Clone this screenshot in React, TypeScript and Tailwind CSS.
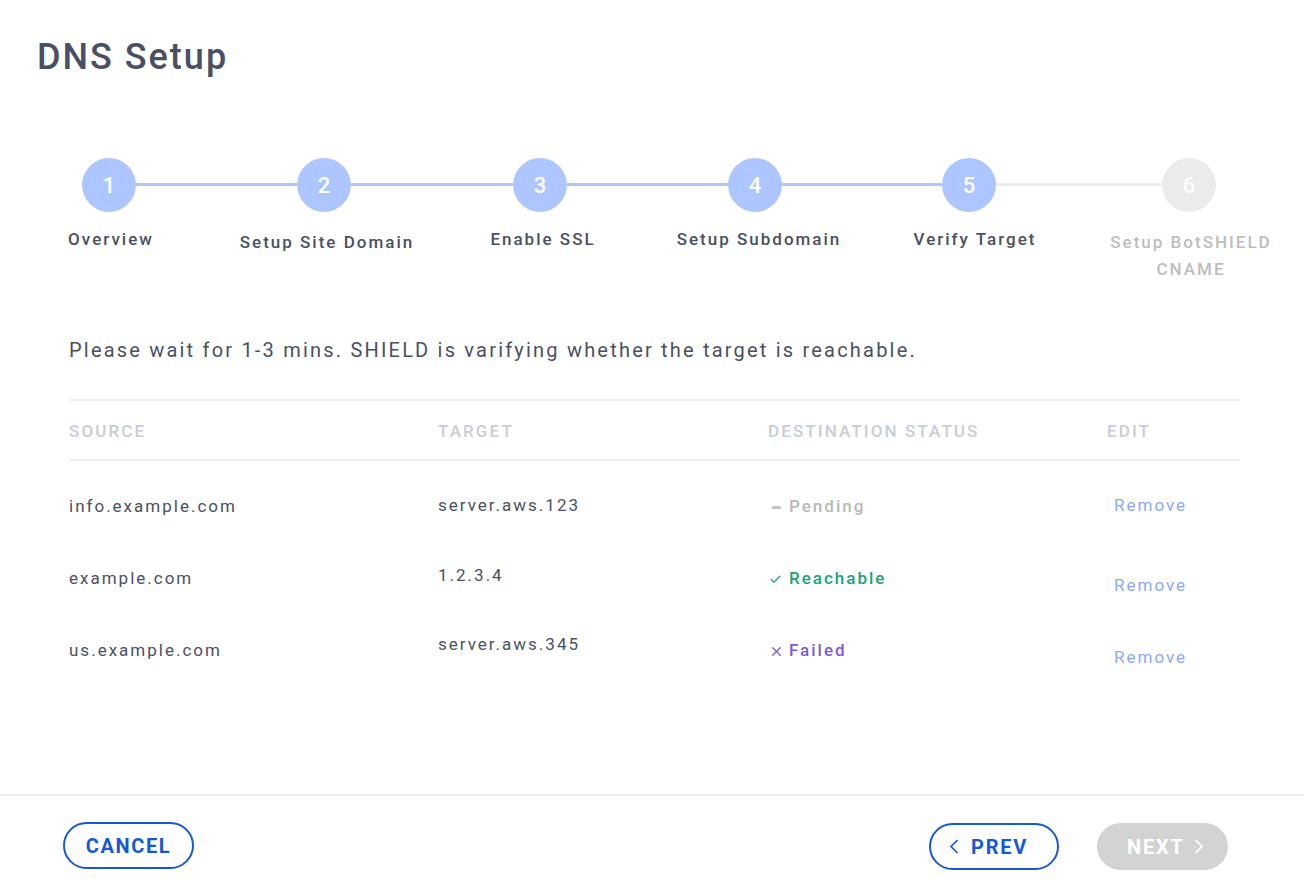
import { Check, X } from "lucide-react";

type Step = { n: number; label: string; done: boolean; nudge: string; shift?: boolean; wrap?: boolean };

const steps: Step[] = [
  { n: 1, label: "Overview", done: true, nudge: "ml-[4px]" },
  { n: 2, label: "Setup Site Domain", done: true, nudge: "ml-[6px]", shift: true },
  { n: 3, label: "Enable SSL", done: true, nudge: "ml-[6px]" },
  { n: 4, label: "Setup Subdomain", done: true, nudge: "ml-[8px]" },
  { n: 5, label: "Verify Target", done: true, nudge: "ml-[12px]" },
  { n: 6, label: "Setup BotSHIELD CNAME", done: false, nudge: "ml-[4px]", shift: true, wrap: true },
];

// gap widths between circles, left to right
const lineWidths = ["w-[161px]", "w-[162px]", "w-[161px]", "w-[160px]", "w-[166px]"];

type Row = {
  source: string;
  target: string;
  status: "pending" | "reachable" | "failed";
  targetClass: string;
  removeClass: string;
};

const rows: Row[] = [
  { source: "info.example.com", target: "server.aws.123", status: "pending", targetClass: "mb-[2px]", removeClass: "mb-[2px]" },
  { source: "example.com", target: "1.2.3.4", status: "reachable", targetClass: "mb-[6px]", removeClass: "mt-[14px]" },
  { source: "us.example.com", target: "server.aws.345", status: "failed", targetClass: "mb-[12px]", removeClass: "mt-[14px]" },
];

function Status({ status }: { status: Row["status"] }) {
  if (status === "pending") {
    return (
      <span className="flex items-center gap-[8px] font-medium text-[#b8b8b8]">
        <span className="ml-[4px] w-[9px] h-[3px] bg-[#c4c4c4] rounded-[1px]" />
        Pending
      </span>
    );
  }
  if (status === "reachable") {
    return (
      <span className="flex items-center gap-[7px] font-medium text-[#1ba47c]">
        <Check className="ml-[1px] w-[13px] h-[13px]" strokeWidth={2.2} />
        Reachable
      </span>
    );
  }
  return (
    <span className="flex items-center gap-[5px] font-medium text-[#7b5bd9]">
      <X className="ml-[1px] w-[15px] h-[15px]" strokeWidth={2.2} />
      Failed
    </span>
  );
}

function Chevron({ dir }: { dir: "left" | "right" }) {
  return (
    <svg width="10" height="15" viewBox="0 0 10 15" fill="none" stroke="currentColor" strokeWidth="1.7">
      {dir === "left" ? <path d="M8.5 1 L2 7.5 L8.5 14" /> : <path d="M1.5 1 L8 7.5 L1.5 14" />}
    </svg>
  );
}

export default function App() {
  return (
    <div
      className="w-[1304px] h-[894px] bg-white flex flex-col text-[#4a5064]"
      style={{ fontFamily: "Roboto, 'Open Sans', sans-serif" }}
    >
      {/* Title */}
      <h1 className="pl-[37px] pt-[35px] text-[36px] leading-[44px] font-medium tracking-[2px]">
        DNS Setup
      </h1>

      {/* Stepper */}
      <div className="flex items-start pl-[82px] mt-[79px] h-[178px]">
        {steps.map((s, i) => (
          <div key={s.n} className="flex items-start">
            <div className="flex flex-col items-center w-[54px]">
              <div
                className={`w-[54px] h-[54px] rounded-full flex items-center justify-center text-white text-[22px] font-medium ${
                  s.done ? "bg-[#aec6ff]" : "bg-[#ebebeb]"
                }`}
              >
                {s.n}
              </div>
              <div
                className={`text-center text-[17px] leading-[27px] font-medium tracking-[2px] ${s.nudge} ${
                  s.wrap ? "w-[185px]" : "w-[220px] whitespace-nowrap"
                } ${s.shift ? "mt-[17px]" : "mt-[14px]"} ${
                  s.done ? "text-[#4a5064]" : "text-[#bdbdbd]"
                }`}
              >
                {s.label}
              </div>
            </div>
            {i < steps.length - 1 && (
              <div
                className={`${lineWidths[i]} h-[3px] mt-[25px] ${
                  steps[i + 1].done ? "bg-[#aec6ff]" : "bg-[#ebebeb]"
                }`}
              />
            )}
          </div>
        ))}
      </div>

      {/* Message */}
      <p className="pl-[69px] text-[20px] leading-[28px] tracking-[2.2px]">
        Please wait for 1-3 mins. SHIELD is varifying whether the target is reachable.
      </p>

      {/* Table */}
      <div className="mx-[69px] w-[1171px] mt-[35px] text-[17px] tracking-[2px]">
        <div className="flex items-center h-[62px] pt-[3px] border-t-2 border-b-2 border-[#efeff1] font-medium text-[#c9ccd9] tracking-[2.1px]">
          <div className="w-[369px]">SOURCE</div>
          <div className="w-[330px]">TARGET</div>
          <div className="w-[339px]">DESTINATION STATUS</div>
          <div>EDIT</div>
        </div>
        <div className="pt-[10px]">
          {rows.map((r) => (
            <div key={r.source} className="flex items-center h-[72px]">
              <div className="w-[369px]">{r.source}</div>
              <div className={`w-[330px] ${r.targetClass}`}>{r.target}</div>
              <div className="w-[339px]">
                <Status status={r.status} />
              </div>
              <div className={`pl-[7px] text-[#8aa8fb] ${r.removeClass}`}>Remove</div>
            </div>
          ))}
        </div>
      </div>

      {/* Footer */}
      <div className="mt-auto border-t-2 border-[#efefef] h-[100px] flex items-start pl-[63px] pr-[76px]">
        <button className="mt-[26px] w-[131px] h-[47px] rounded-full border-2 border-[#1559d6] text-[#1559d6] text-[20px] font-bold tracking-[1.6px] flex items-center justify-center">
          CANCEL
        </button>
        <div className="ml-auto flex gap-[38px] mt-[27px]">
          <button className="w-[130px] h-[47px] rounded-full border-2 border-[#1559d6] text-[#1559d6] text-[20px] font-bold tracking-[1.8px] flex items-center pl-[18px] gap-[12px]">
            <Chevron dir="left" />
            PREV
          </button>
          <button className="w-[131px] h-[47px] rounded-full bg-[#d3d3d3] text-white text-[20px] font-bold tracking-[1.8px] flex items-center pl-[30px] gap-[9px]">
            NEXT
            <Chevron dir="right" />
          </button>
        </div>
      </div>
    </div>
  );
}
